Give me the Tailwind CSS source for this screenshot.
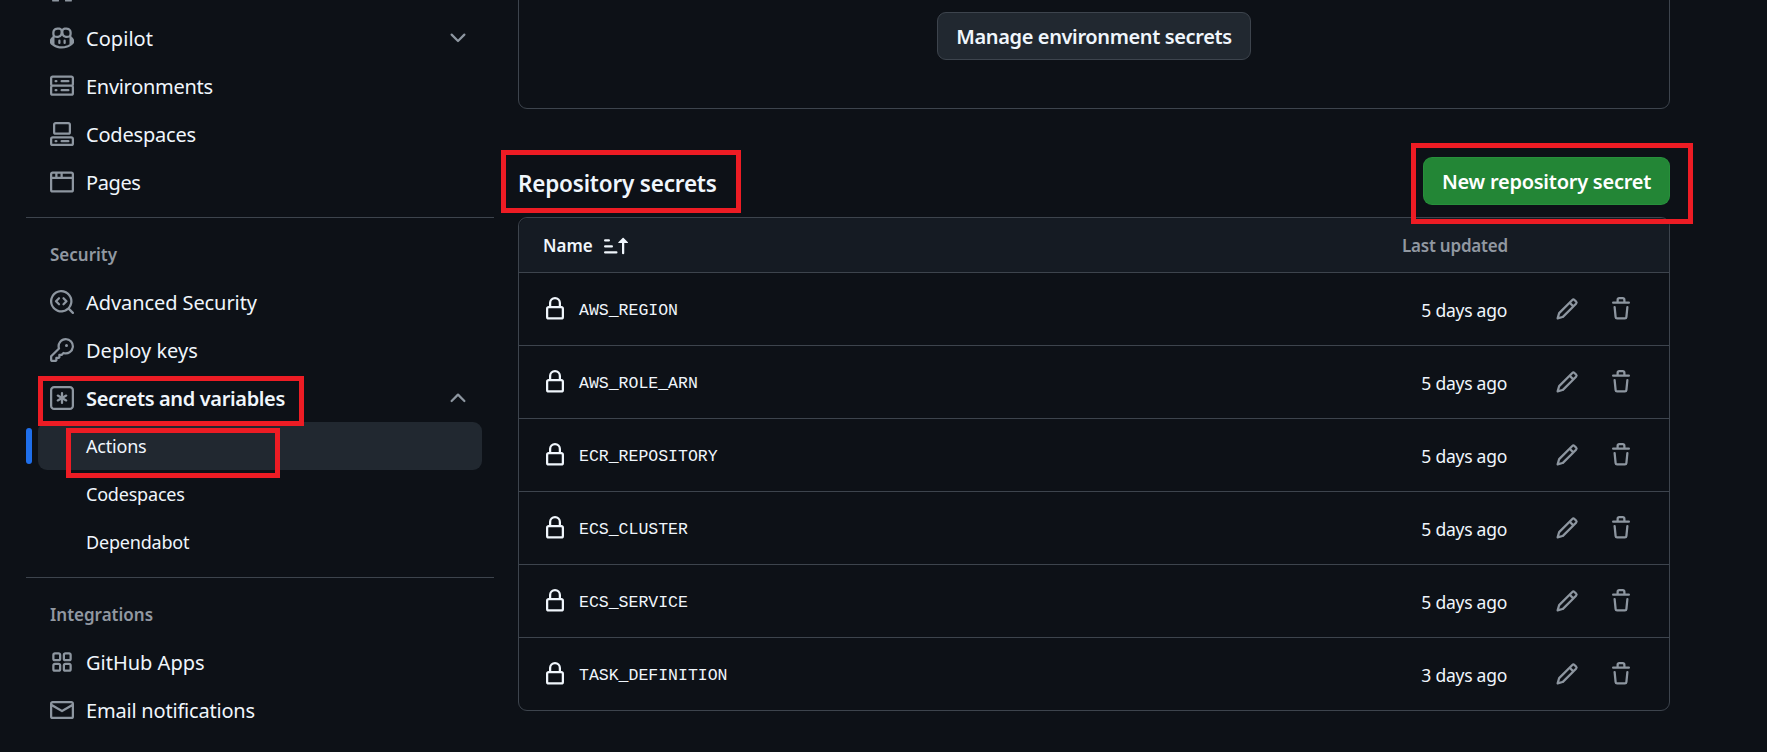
<!DOCTYPE html>
<html>
<head>
<meta charset="utf-8">
<script src="https://cdn.jsdelivr.net/npm/@tailwindcss/browser@4"></script>
</head>
<body class="bg-[#0d1117]">
<div class="relative flex h-[752px] w-[1767px] overflow-hidden bg-[#0d1117] font-['Noto_Sans',sans-serif] text-[#f0f6fc]">
  <aside class="ml-[26px] w-[468px] shrink-0 -mt-[34px] text-[20px] tracking-[-0.2px]">
    <div class="flex h-[48px] items-center gap-[12px] mx-[12px] px-[12px]">
      <svg class="h-[24px] w-[24px] shrink-0" viewBox="0 0 16 16" fill="#8d96a0"><rect x="1.4" y="14.4" width="4.600" height="1.300" rx=".6"/><rect x="10" y="14.400" width="4.600" height="1.300" rx=".6"/></svg>
    </div>
    <div class="flex h-[48px] items-center gap-[12px] mx-[12px] px-[12px]">
      <svg class="h-[24px] w-[24px] shrink-0" viewBox="0 0 16 16" fill="#8d96a0"><path d="M7.998 15.035c-4.562 0-7.873-2.914-7.998-3.749V9.338c.085-.628.677-1.686 1.588-2.065.013-.07.024-.143.036-.218.029-.183.06-.384.126-.612-.201-.508-.254-1.084-.254-1.656 0-.87.128-1.769.693-2.484.579-.733 1.494-1.124 2.724-1.261 1.206-.134 2.262.034 2.944.765.05.053.096.108.139.165.044-.057.094-.112.143-.165.682-.731 1.738-.899 2.944-.765 1.23.137 2.145.528 2.724 1.261.566.715.693 1.614.693 2.484 0 .572-.053 1.148-.254 1.656.066.228.098.429.126.612.012.076.024.148.037.218.924.385 1.522 1.471 1.591 2.095v1.872c0 .766-3.351 3.795-8.002 3.795Zm0-1.485c2.28 0 4.584-1.11 5.002-1.433V7.862l-.023-.116c-.49.21-1.075.291-1.727.291-1.146 0-2.059-.327-2.71-.991A3.222 3.222 0 0 1 8 6.303a3.24 3.24 0 0 1-.544.743c-.65.664-1.563.991-2.71.991-.652 0-1.236-.081-1.727-.291l-.023.116v4.255c.419.323 2.722 1.433 5.002 1.433ZM6.762 2.83c-.193-.206-.637-.413-1.682-.297-1.019.113-1.479.404-1.713.7-.247.312-.369.789-.369 1.554 0 .793.129 1.171.308 1.371.162.181.519.379 1.442.379.853 0 1.339-.235 1.638-.54.315-.322.527-.827.617-1.553.117-.935-.037-1.395-.241-1.614Zm4.155-.297c-1.044-.116-1.488.091-1.681.297-.204.219-.359.679-.242 1.614.091.726.303 1.231.618 1.553.299.305.784.54 1.638.54.922 0 1.28-.198 1.442-.379.179-.2.308-.578.308-1.371 0-.765-.123-1.242-.37-1.554-.233-.296-.693-.587-1.713-.7Z"/><path d="M6.25 9.037a.75.75 0 0 1 .75.75v1.501a.75.75 0 0 1-1.5 0V9.787a.75.75 0 0 1 .75-.75Zm4.25.75v1.501a.75.75 0 0 1-1.5 0V9.787a.75.75 0 0 1 1.5 0Z"/></svg>
      <span class="flex-1 pt-[2px] tracking-[0.05px]">Copilot</span>
      <svg class="h-[24px] w-[24px] shrink-0" viewBox="0 0 16 16" fill="#8d96a0"><path d="M12.78 5.22a.749.749 0 0 1 0 1.06l-4.25 4.25a.749.749 0 0 1-1.06 0L3.22 6.28a.749.749 0 1 1 1.06-1.06L8 8.939l3.72-3.719a.749.749 0 0 1 1.06 0Z"/></svg>
    </div>
    <div class="flex h-[48px] items-center gap-[12px] mx-[12px] px-[12px]">
      <svg class="h-[24px] w-[24px] shrink-0" viewBox="0 0 16 16" fill="#8d96a0"><path d="M1.75 1h12.5c.966 0 1.75.784 1.75 1.75v4c0 .372-.116.717-.314 1 .198.283.314.628.314 1v4a1.75 1.75 0 0 1-1.75 1.75H1.75A1.75 1.75 0 0 1 0 12.75v-4c0-.358.109-.707.314-1a1.739 1.739 0 0 1-.314-1v-4C0 1.784.784 1 1.75 1ZM1.5 2.75v4c0 .138.112.25.25.25h12.5a.25.25 0 0 0 .25-.25v-4a.25.25 0 0 0-.25-.25H1.75a.25.25 0 0 0-.25.25Zm.25 5.750a.25.25 0 0 0-.25.25v4c0 .138.112.25.25.25h12.5a.25.25 0 0 0 .25-.25v-4a.25.25 0 0 0-.25-.25ZM7 4.75A.75.75 0 0 1 7.75 4h4.5a.75.75 0 0 1 0 1.5h-4.5A.75.75 0 0 1 7 4.75ZM7.75 10h4.5a.75.75 0 0 1 0 1.5h-4.5a.75.75 0 0 1 0-1.500ZM3 4.75A.75.75 0 0 1 3.75 4h.5a.75.75 0 0 1 0 1.5h-.5A.75.75 0 0 1 3 4.75ZM3.75 10h.5a.75.75 0 0 1 0 1.5h-.5a.75.75 0 0 1 0-1.500Z"/></svg>
      <span class="pt-[2px] tracking-[-0.3px]">Environments</span>
    </div>
    <div class="flex h-[48px] items-center gap-[12px] mx-[12px] px-[12px]">
      <svg class="h-[24px] w-[24px] shrink-0" viewBox="0 0 16 16" fill="#8d96a0"><path d="M0 11.25c0-.966.784-1.75 1.75-1.75h12.5c.966 0 1.75.784 1.75 1.75v3A1.75 1.75 0 0 1 14.25 16H1.75A1.75 1.75 0 0 1 0 14.25Zm2-9.5C2 .784 2.784 0 3.75 0h8.5C13.216 0 14 .784 14 1.75v5a1.75 1.75 0 0 1-1.75 1.75h-8.5A1.75 1.75 0 0 1 2 6.75Zm1.75-.25a.25.25 0 0 0-.25.25v5c0 .138.112.25.25.25h8.5a.25.25 0 0 0 .25-.25v-5a.25.25 0 0 0-.25-.25Zm-2 9.500a.25.25 0 0 0-.25.25v3c0 .138.112.25.25.25h12.5a.25.25 0 0 0 .25-.25v-3a.25.25 0 0 0-.25-.25Z"/><path d="M7 12.75a.75.75 0 0 1 .75-.75h4.5a.75.75 0 0 1 0 1.5h-4.5a.75.75 0 0 1-.75-.75Zm-4 0a.75.75 0 0 1 .75-.75h.5a.75.75 0 0 1 0 1.5h-.5a.75.75 0 0 1-.75-.75Z"/></svg>
      <span class="pt-[2px]">Codespaces</span>
    </div>
    <div class="flex h-[48px] items-center gap-[12px] mx-[12px] px-[12px]">
      <svg class="h-[24px] w-[24px] shrink-0" viewBox="0 0 16 16" fill="#8d96a0"><path d="M0 2.75C0 1.784.784 1 1.75 1h12.5c.966 0 1.75.784 1.75 1.75v10.5A1.75 1.75 0 0 1 14.25 15H1.75A1.75 1.75 0 0 1 0 13.25ZM14.5 6h-13v7.25c0 .138.112.25.25.25h12.5a.25.25 0 0 0 .25-.25Zm-6-3.500v2h6v-1.750a.25.25 0 0 0-.25-.25ZM5 2.5v2h2v-2Zm-3.250 0a.25.25 0 0 0-.25.25V4.500h2v-2Z"/></svg>
      <span class="pt-[2px] tracking-[-0.4px]">Pages</span>
    </div>
    <div class="mt-[11px] h-px bg-[#3d444d]"></div>
    <div class="flex h-[60px] items-center pt-[14px] pl-[24px] text-[17px] font-semibold text-[#9198a1] tracking-normal">Security</div>
    <div class="flex h-[48px] items-center gap-[12px] mx-[12px] px-[12px]">
      <svg class="h-[24px] w-[24px] shrink-0" viewBox="0 0 16 16" fill="#8d96a0"><path d="M8.47 4.97a.75.75 0 0 0 0 1.06L9.94 7.5 8.47 8.97a.75.75 0 1 0 1.06 1.06l2-2a.75.75 0 0 0 0-1.06l-2-2a.75.75 0 0 0-1.06 0ZM6.53 6.03a.75.75 0 0 0-1.06-1.06l-2 2a.75.75 0 0 0 0 1.06l2 2a.75.75 0 1 0 1.06-1.06L5.06 7.5l1.47-1.47Z"/><path d="M12.246 13.307a7.501 7.501 0 1 1 1.06-1.06l2.474 2.473a.749.749 0 0 1-.326 1.275.749.749 0 0 1-.734-.215ZM1.5 7.5a6.002 6.002 0 0 0 3.608 5.504 6.002 6.002 0 0 0 6.486-1.117.748.748 0 0 1 .292-.293A6 6 0 1 0 1.5 7.5Z"/></svg>
      <span class="pt-[2px] tracking-[-0.08px]">Advanced Security</span>
    </div>
    <div class="flex h-[48px] items-center gap-[12px] mx-[12px] px-[12px]">
      <svg class="h-[24px] w-[24px] shrink-0" viewBox="0 0 16 16" fill="#8d96a0"><path d="M10.5 0a5.499 5.499 0 1 1-1.288 10.848l-.932.932a.749.749 0 0 1-.53.22H7v.75a.749.749 0 0 1-.22.53l-.5.5a.749.749 0 0 1-.53.22H5v.75a.749.749 0 0 1-.22.53l-.5.5a.749.749 0 0 1-.53.22h-2A1.75 1.75 0 0 1 0 14.25v-2c0-.199.079-.389.22-.53l4.932-4.932A5.5 5.5 0 0 1 10.5 0Zm-4 5.5c-.001.431.069.86.205 1.269a.75.75 0 0 1-.181.768L1.5 12.56v1.69c0 .138.112.25.25.25h1.69l.06-.06v-1.19a.75.75 0 0 1 .75-.75h1.19l.06-.06v-1.19a.75.75 0 0 1 .75-.75h1.19l1.023-1.025a.75.75 0 0 1 .768-.18A4 4 0 1 0 6.5 5.5ZM11 6a1 1 0 1 1 0-2 1 1 0 0 1 0 2Z"/></svg>
      <span class="pt-[2px] tracking-[0px]">Deploy keys</span>
    </div>
    <div class="flex h-[48px] items-center gap-[12px] mx-[12px] px-[12px]">
      <svg class="h-[24px] w-[24px] shrink-0" viewBox="0 0 16 16" fill="#8d96a0"><path d="M0 2.75A2.75 2.75 0 0 1 2.75 0h10.5A2.75 2.75 0 0 1 16 2.75v10.5A2.75 2.75 0 0 1 13.25 16H2.75A2.75 2.75 0 0 1 0 13.25ZM2.75 1.5c-.69 0-1.25.56-1.25 1.25v10.5c0 .69.56 1.25 1.25 1.25h10.5c.69 0 1.25-.56 1.25-1.25V2.75c0-.69-.56-1.25-1.25-1.25Z"/><path d="M8 4a.75.75 0 0 1 .75.75V6.7l1.69-.975a.75.75 0 0 1 .75 1.3L9.5 8l1.69.976a.75.75 0 0 1-.75 1.298L8.75 9.3v1.951a.75.75 0 0 1-1.5 0V9.299l-1.69.976a.75.75 0 0 1-.75-1.3L6.5 8l-1.69-.975a.75.75 0 0 1 .75-1.3l1.69.976V4.75A.75.75 0 0 1 8 4Z"/></svg>
      <span class="flex-1 pt-[2px] font-semibold tracking-[-0.36px]">Secrets and variables</span>
      <svg class="h-[24px] w-[24px] shrink-0" viewBox="0 0 16 16" fill="#8d96a0"><path d="M3.22 10.53a.749.749 0 0 1 0-1.06l4.25-4.25a.749.749 0 0 1 1.06 0l4.25 4.25a.749.749 0 1 1-1.06 1.06L8 6.811 4.28 10.53a.749.749 0 0 1-1.06 0Z"/></svg>
    </div>
    <div class="relative flex h-[48px] items-center mx-[12px] pl-[48px] rounded-[9px] bg-[#212830] text-[18px]">
      <span class="absolute -left-[12px] top-[6px] h-[36px] w-[6px] rounded-full bg-[#1f6feb]"></span>
      <span>Actions</span>
    </div>
    <div class="flex h-[48px] items-center mx-[12px] pl-[48px] text-[18px]">Codespaces</div>
    <div class="flex h-[48px] items-center mx-[12px] pl-[48px] text-[18px]">Dependabot</div>
    <div class="mt-[11px] h-px bg-[#3d444d]"></div>
    <div class="flex h-[60px] items-center pt-[14px] pl-[24px] text-[17px] font-semibold text-[#9198a1] tracking-normal">Integrations</div>
    <div class="flex h-[48px] items-center gap-[12px] mx-[12px] px-[12px]">
      <svg class="h-[24px] w-[24px] shrink-0" viewBox="0 0 16 16" fill="#8d96a0"><path d="M1.5 3.25c0-.966.784-1.75 1.75-1.75h2.5c.966 0 1.75.784 1.75 1.75v2.5A1.75 1.75 0 0 1 5.75 7.5h-2.5A1.75 1.75 0 0 1 1.5 5.75Zm7 0c0-.966.784-1.75 1.75-1.75h2.5c.966 0 1.75.784 1.75 1.75v2.5a1.75 1.75 0 0 1-1.75 1.75h-2.5A1.75 1.75 0 0 1 8.5 5.75Zm-7 7c0-.966.784-1.75 1.75-1.75h2.5c.966 0 1.75.784 1.75 1.75v2.5a1.75 1.75 0 0 1-1.75 1.75h-2.5a1.75 1.75 0 0 1-1.75-1.75Zm7 0c0-.966.784-1.75 1.75-1.75h2.5c.966 0 1.75.784 1.75 1.75v2.5a1.75 1.75 0 0 1-1.75 1.75h-2.5a1.75 1.75 0 0 1-1.75-1.75ZM3.25 3a.25.25 0 0 0-.25.25v2.5c0 .138.112.25.25.25h2.5A.25.25 0 0 0 6 5.75v-2.5A.25.25 0 0 0 5.75 3Zm7 0a.25.25 0 0 0-.25.25v2.5c0 .138.112.25.25.25h2.5a.25.25 0 0 0 .25-.25v-2.5a.25.25 0 0 0-.25-.25Zm-7 7a.25.25 0 0 0-.25.25v2.5c0 .138.112.25.25.25h2.5a.25.25 0 0 0 .25-.25v-2.5a.25.25 0 0 0-.25-.25Zm7 0a.25.25 0 0 0-.25.25v2.5c0 .138.112.25.25.25h2.5a.25.25 0 0 0 .25-.25v-2.5a.25.25 0 0 0-.25-.25Z"/></svg>
      <span class="pt-[2px] tracking-[0px]">GitHub Apps</span>
    </div>
    <div class="flex h-[48px] items-center gap-[12px] mx-[12px] px-[12px]">
      <svg class="h-[24px] w-[24px] shrink-0" viewBox="0 0 16 16" fill="#8d96a0"><path d="M1.75 2h12.5c.966 0 1.75.784 1.75 1.75v8.5A1.75 1.75 0 0 1 14.25 14H1.75A1.75 1.75 0 0 1 0 12.25v-8.5C0 2.784.784 2 1.75 2ZM1.5 12.251c0 .138.112.25.25.25h12.5a.25.25 0 0 0 .25-.25V5.809L8.38 9.397a.75.75 0 0 1-.76 0L1.5 5.809v6.442Zm13-8.181v-.32a.25.25 0 0 0-.25-.25H1.75a.25.25 0 0 0-.25.25v.32L8 7.88Z"/></svg>
      <span class="pt-[2px]">Email notifications</span>
    </div>
  </aside>

  <main class="ml-[24px] w-[1152px] shrink-0">
    <div class="-mt-[40px] flex h-[149px] justify-center rounded-b-[9px] border border-[#3d444d] pt-[51px]">
      <div class="flex h-[48px] w-[314px] items-center justify-center rounded-[9px] border border-[#3d444d] bg-[#212830] pt-[2px] text-[20px] font-semibold tracking-[-0.37px]">Manage environment secrets</div>
    </div>
    <div class="mt-[48px] mb-[12px] flex h-[48px] items-center justify-between">
      <h2 class="pt-[5px] text-[22.5px] font-semibold tracking-[-0.2px]">Repository secrets</h2>
      <div class="flex h-[48px] w-[247px] items-center justify-center rounded-[9px] border border-[#2ea043]/40 bg-[#238636] pt-[2px] text-[20px] font-semibold tracking-[-0.25px] text-white">New repository secret</div>
    </div>
    <div class="h-[494px] rounded-[9px] border border-[#3d444d] bg-[#0d1117]">
      <div class="flex h-[55px] items-center rounded-t-[9px] border-b border-[#3d444d] bg-[#151b23] pl-[24px] pt-px text-[17px] font-semibold">
        <span>Name</span>
        <svg class="ml-[11px] h-[24px] w-[24px]" viewBox="0 0 16 16" fill="#f0f6fc"><path d="m12.927 2.573 3 3A.25.25 0 0 1 15.75 6H13.5v6.75a.75.75 0 0 1-1.5 0V6H9.75a.25.25 0 0 1-.177-.427l3-3a.25.25 0 0 1 .354 0ZM0 12.25a.75.75 0 0 1 .75-.75h7.5a.75.75 0 0 1 0 1.5H.75a.75.75 0 0 1-.75-.75Zm0-4a.75.75 0 0 1 .75-.75h4.5a.75.75 0 0 1 0 1.5H.75A.75.75 0 0 1 0 8.25Zm0-4a.75.75 0 0 1 .75-.75h2.5a.75.75 0 0 1 0 1.5H.75A.75.75 0 0 1 0 4.25Z"/></svg>
        <span class="ml-auto mr-[161px] tracking-[-0.2px] text-[#9198a1]">Last updated</span>
      </div>
      <div class="flex h-[73px] items-center border-b border-[#3d444d] pl-[24px]">
        <svg class="h-[24px] w-[24px]" viewBox="0 0 16 16" fill="#f0f6fc"><path d="M4 4a4 4 0 0 1 8 0v2h.25c.966 0 1.75.784 1.75 1.75v5.5A1.75 1.75 0 0 1 12.25 15h-8.500A1.75 1.75 0 0 1 2 13.25v-5.500C2 6.784 2.784 6 3.750 6H4Zm8.250 3.500h-8.500a.25.25 0 0 0-.25.25v5.500c0 .138.112.25.25.25h8.500a.25.25 0 0 0 .25-.25v-5.500a.25.25 0 0 0-.25-.25ZM10.500 6V4a2.500 2.500 0 1 0-5 0v2Z"/></svg>
        <span class="ml-[12px] flex-1 pt-[4px] font-['Liberation_Mono',monospace] text-[16.5px]">AWS_REGION</span>
        <span class="pt-[2px] text-[17.5px] tracking-[-0.25px]">5 days ago</span>
        <svg class="ml-[48px] h-[24px] w-[24px]" viewBox="0 0 16 16" fill="#8d96a0"><path d="M11.013 1.427a1.75 1.75 0 0 1 2.474 0l1.086 1.086a1.75 1.75 0 0 1 0 2.474l-8.610 8.610c-.21.21-.47.364-.756.445l-3.251.93a.75.75 0 0 1-.927-.928l.929-3.250c.081-.286.235-.547.445-.758l8.610-8.610Zm.176 4.823L9.750 4.810l-6.286 6.287a.253.253 0 0 0-.064.108l-.558 1.953 1.953-.558a.253.253 0 0 0 .108-.064Zm1.238-3.763a.25.25 0 0 0-.354 0L10.811 3.750l1.439 1.440 1.263-1.263a.25.25 0 0 0 0-.354Z"/></svg>
        <svg class="ml-[30px] mr-[36px] h-[24px] w-[24px]" viewBox="0 0 16 16" fill="#8d96a0"><path d="M11 1.750V3h2.250a.75.75 0 0 1 0 1.500H2.750a.75.75 0 0 1 0-1.500H5V1.750C5 .784 5.784 0 6.750 0h2.500C10.216 0 11 .784 11 1.750ZM4.496 6.675l.66 6.600a.25.25 0 0 0 .249.225h5.190a.25.25 0 0 0 .249-.225l.66-6.600a.75.75 0 0 1 1.492.149l-.66 6.600A1.748 1.748 0 0 1 10.595 15h-5.190a1.750 1.750 0 0 1-1.741-1.575l-.66-6.600a.75.75 0 1 1 1.492-.150ZM6.500 1.750V3h3V1.750a.25.25 0 0 0-.25-.25h-2.500a.25.25 0 0 0-.25.25Z"/></svg>
      </div>
      <div class="flex h-[73px] items-center border-b border-[#3d444d] pl-[24px]">
        <svg class="h-[24px] w-[24px]" viewBox="0 0 16 16" fill="#f0f6fc"><path d="M4 4a4 4 0 0 1 8 0v2h.25c.966 0 1.75.784 1.75 1.75v5.5A1.75 1.75 0 0 1 12.25 15h-8.500A1.75 1.75 0 0 1 2 13.25v-5.500C2 6.784 2.784 6 3.750 6H4Zm8.250 3.500h-8.500a.25.25 0 0 0-.25.25v5.500c0 .138.112.25.25.25h8.500a.25.25 0 0 0 .25-.25v-5.500a.25.25 0 0 0-.25-.25ZM10.500 6V4a2.500 2.500 0 1 0-5 0v2Z"/></svg>
        <span class="ml-[12px] flex-1 pt-[4px] font-['Liberation_Mono',monospace] text-[16.5px]">AWS_ROLE_ARN</span>
        <span class="pt-[2px] text-[17.5px] tracking-[-0.25px]">5 days ago</span>
        <svg class="ml-[48px] h-[24px] w-[24px]" viewBox="0 0 16 16" fill="#8d96a0"><path d="M11.013 1.427a1.75 1.75 0 0 1 2.474 0l1.086 1.086a1.75 1.75 0 0 1 0 2.474l-8.610 8.610c-.21.21-.47.364-.756.445l-3.251.93a.75.75 0 0 1-.927-.928l.929-3.250c.081-.286.235-.547.445-.758l8.610-8.610Zm.176 4.823L9.750 4.810l-6.286 6.287a.253.253 0 0 0-.064.108l-.558 1.953 1.953-.558a.253.253 0 0 0 .108-.064Zm1.238-3.763a.25.25 0 0 0-.354 0L10.811 3.750l1.439 1.440 1.263-1.263a.25.25 0 0 0 0-.354Z"/></svg>
        <svg class="ml-[30px] mr-[36px] h-[24px] w-[24px]" viewBox="0 0 16 16" fill="#8d96a0"><path d="M11 1.750V3h2.250a.75.75 0 0 1 0 1.500H2.750a.75.75 0 0 1 0-1.500H5V1.750C5 .784 5.784 0 6.750 0h2.500C10.216 0 11 .784 11 1.750ZM4.496 6.675l.66 6.600a.25.25 0 0 0 .249.225h5.190a.25.25 0 0 0 .249-.225l.66-6.600a.75.75 0 0 1 1.492.149l-.66 6.600A1.748 1.748 0 0 1 10.595 15h-5.190a1.750 1.750 0 0 1-1.741-1.575l-.66-6.600a.75.75 0 1 1 1.492-.150ZM6.500 1.750V3h3V1.750a.25.25 0 0 0-.25-.25h-2.500a.25.25 0 0 0-.25.25Z"/></svg>
      </div>
      <div class="flex h-[73px] items-center border-b border-[#3d444d] pl-[24px]">
        <svg class="h-[24px] w-[24px]" viewBox="0 0 16 16" fill="#f0f6fc"><path d="M4 4a4 4 0 0 1 8 0v2h.25c.966 0 1.75.784 1.75 1.75v5.5A1.75 1.75 0 0 1 12.25 15h-8.500A1.75 1.75 0 0 1 2 13.25v-5.500C2 6.784 2.784 6 3.750 6H4Zm8.250 3.500h-8.500a.25.25 0 0 0-.25.25v5.500c0 .138.112.25.25.25h8.500a.25.25 0 0 0 .25-.25v-5.500a.25.25 0 0 0-.25-.25ZM10.500 6V4a2.500 2.500 0 1 0-5 0v2Z"/></svg>
        <span class="ml-[12px] flex-1 pt-[4px] font-['Liberation_Mono',monospace] text-[16.5px]">ECR_REPOSITORY</span>
        <span class="pt-[2px] text-[17.5px] tracking-[-0.25px]">5 days ago</span>
        <svg class="ml-[48px] h-[24px] w-[24px]" viewBox="0 0 16 16" fill="#8d96a0"><path d="M11.013 1.427a1.75 1.75 0 0 1 2.474 0l1.086 1.086a1.75 1.75 0 0 1 0 2.474l-8.610 8.610c-.21.21-.47.364-.756.445l-3.251.93a.75.75 0 0 1-.927-.928l.929-3.250c.081-.286.235-.547.445-.758l8.610-8.610Zm.176 4.823L9.750 4.810l-6.286 6.287a.253.253 0 0 0-.064.108l-.558 1.953 1.953-.558a.253.253 0 0 0 .108-.064Zm1.238-3.763a.25.25 0 0 0-.354 0L10.811 3.750l1.439 1.440 1.263-1.263a.25.25 0 0 0 0-.354Z"/></svg>
        <svg class="ml-[30px] mr-[36px] h-[24px] w-[24px]" viewBox="0 0 16 16" fill="#8d96a0"><path d="M11 1.750V3h2.250a.75.75 0 0 1 0 1.500H2.750a.75.75 0 0 1 0-1.500H5V1.750C5 .784 5.784 0 6.750 0h2.500C10.216 0 11 .784 11 1.750ZM4.496 6.675l.66 6.600a.25.25 0 0 0 .249.225h5.190a.25.25 0 0 0 .249-.225l.66-6.600a.75.75 0 0 1 1.492.149l-.66 6.600A1.748 1.748 0 0 1 10.595 15h-5.190a1.750 1.750 0 0 1-1.741-1.575l-.66-6.600a.75.75 0 1 1 1.492-.150ZM6.500 1.750V3h3V1.750a.25.25 0 0 0-.25-.25h-2.500a.25.25 0 0 0-.25.25Z"/></svg>
      </div>
      <div class="flex h-[73px] items-center border-b border-[#3d444d] pl-[24px]">
        <svg class="h-[24px] w-[24px]" viewBox="0 0 16 16" fill="#f0f6fc"><path d="M4 4a4 4 0 0 1 8 0v2h.25c.966 0 1.75.784 1.75 1.75v5.5A1.75 1.75 0 0 1 12.25 15h-8.500A1.75 1.75 0 0 1 2 13.25v-5.500C2 6.784 2.784 6 3.750 6H4Zm8.250 3.500h-8.500a.25.25 0 0 0-.25.25v5.500c0 .138.112.25.25.25h8.500a.25.25 0 0 0 .25-.25v-5.500a.25.25 0 0 0-.25-.25ZM10.500 6V4a2.500 2.500 0 1 0-5 0v2Z"/></svg>
        <span class="ml-[12px] flex-1 pt-[4px] font-['Liberation_Mono',monospace] text-[16.5px]">ECS_CLUSTER</span>
        <span class="pt-[2px] text-[17.5px] tracking-[-0.25px]">5 days ago</span>
        <svg class="ml-[48px] h-[24px] w-[24px]" viewBox="0 0 16 16" fill="#8d96a0"><path d="M11.013 1.427a1.75 1.75 0 0 1 2.474 0l1.086 1.086a1.75 1.75 0 0 1 0 2.474l-8.610 8.610c-.21.21-.47.364-.756.445l-3.251.93a.75.75 0 0 1-.927-.928l.929-3.250c.081-.286.235-.547.445-.758l8.610-8.610Zm.176 4.823L9.750 4.810l-6.286 6.287a.253.253 0 0 0-.064.108l-.558 1.953 1.953-.558a.253.253 0 0 0 .108-.064Zm1.238-3.763a.25.25 0 0 0-.354 0L10.811 3.750l1.439 1.440 1.263-1.263a.25.25 0 0 0 0-.354Z"/></svg>
        <svg class="ml-[30px] mr-[36px] h-[24px] w-[24px]" viewBox="0 0 16 16" fill="#8d96a0"><path d="M11 1.750V3h2.250a.75.75 0 0 1 0 1.500H2.750a.75.75 0 0 1 0-1.500H5V1.750C5 .784 5.784 0 6.750 0h2.500C10.216 0 11 .784 11 1.750ZM4.496 6.675l.66 6.600a.25.25 0 0 0 .249.225h5.190a.25.25 0 0 0 .249-.225l.66-6.600a.75.75 0 0 1 1.492.149l-.66 6.600A1.748 1.748 0 0 1 10.595 15h-5.190a1.750 1.750 0 0 1-1.741-1.575l-.66-6.600a.75.75 0 1 1 1.492-.150ZM6.500 1.750V3h3V1.750a.25.25 0 0 0-.25-.25h-2.500a.25.25 0 0 0-.25.25Z"/></svg>
      </div>
      <div class="flex h-[73px] items-center border-b border-[#3d444d] pl-[24px]">
        <svg class="h-[24px] w-[24px]" viewBox="0 0 16 16" fill="#f0f6fc"><path d="M4 4a4 4 0 0 1 8 0v2h.25c.966 0 1.75.784 1.75 1.75v5.5A1.75 1.75 0 0 1 12.25 15h-8.500A1.75 1.75 0 0 1 2 13.25v-5.500C2 6.784 2.784 6 3.750 6H4Zm8.250 3.500h-8.500a.25.25 0 0 0-.25.25v5.500c0 .138.112.25.25.25h8.500a.25.25 0 0 0 .25-.25v-5.500a.25.25 0 0 0-.25-.25ZM10.500 6V4a2.500 2.500 0 1 0-5 0v2Z"/></svg>
        <span class="ml-[12px] flex-1 pt-[4px] font-['Liberation_Mono',monospace] text-[16.5px]">ECS_SERVICE</span>
        <span class="pt-[2px] text-[17.5px] tracking-[-0.25px]">5 days ago</span>
        <svg class="ml-[48px] h-[24px] w-[24px]" viewBox="0 0 16 16" fill="#8d96a0"><path d="M11.013 1.427a1.75 1.75 0 0 1 2.474 0l1.086 1.086a1.75 1.75 0 0 1 0 2.474l-8.610 8.610c-.21.21-.47.364-.756.445l-3.251.93a.75.75 0 0 1-.927-.928l.929-3.250c.081-.286.235-.547.445-.758l8.610-8.610Zm.176 4.823L9.750 4.810l-6.286 6.287a.253.253 0 0 0-.064.108l-.558 1.953 1.953-.558a.253.253 0 0 0 .108-.064Zm1.238-3.763a.25.25 0 0 0-.354 0L10.811 3.750l1.439 1.440 1.263-1.263a.25.25 0 0 0 0-.354Z"/></svg>
        <svg class="ml-[30px] mr-[36px] h-[24px] w-[24px]" viewBox="0 0 16 16" fill="#8d96a0"><path d="M11 1.750V3h2.250a.75.75 0 0 1 0 1.500H2.750a.75.75 0 0 1 0-1.500H5V1.750C5 .784 5.784 0 6.750 0h2.500C10.216 0 11 .784 11 1.750ZM4.496 6.675l.66 6.600a.25.25 0 0 0 .249.225h5.190a.25.25 0 0 0 .249-.225l.66-6.600a.75.75 0 0 1 1.492.149l-.66 6.600A1.748 1.748 0 0 1 10.595 15h-5.190a1.750 1.750 0 0 1-1.741-1.575l-.66-6.600a.75.75 0 1 1 1.492-.150ZM6.500 1.750V3h3V1.750a.25.25 0 0 0-.25-.25h-2.500a.25.25 0 0 0-.25.25Z"/></svg>
      </div>
      <div class="flex h-[72px] items-center pl-[24px]">
        <svg class="h-[24px] w-[24px]" viewBox="0 0 16 16" fill="#f0f6fc"><path d="M4 4a4 4 0 0 1 8 0v2h.25c.966 0 1.75.784 1.75 1.75v5.5A1.75 1.75 0 0 1 12.25 15h-8.500A1.75 1.75 0 0 1 2 13.25v-5.500C2 6.784 2.784 6 3.750 6H4Zm8.250 3.500h-8.500a.25.25 0 0 0-.25.25v5.500c0 .138.112.25.25.25h8.500a.25.25 0 0 0 .25-.25v-5.500a.25.25 0 0 0-.25-.25ZM10.500 6V4a2.500 2.500 0 1 0-5 0v2Z"/></svg>
        <span class="ml-[12px] flex-1 pt-[4px] font-['Liberation_Mono',monospace] text-[16.5px]">TASK_DEFINITION</span>
        <span class="pt-[2px] text-[17.5px] tracking-[-0.25px]">3 days ago</span>
        <svg class="ml-[48px] h-[24px] w-[24px]" viewBox="0 0 16 16" fill="#8d96a0"><path d="M11.013 1.427a1.75 1.75 0 0 1 2.474 0l1.086 1.086a1.75 1.75 0 0 1 0 2.474l-8.610 8.610c-.21.21-.47.364-.756.445l-3.251.93a.75.75 0 0 1-.927-.928l.929-3.250c.081-.286.235-.547.445-.758l8.610-8.610Zm.176 4.823L9.750 4.810l-6.286 6.287a.253.253 0 0 0-.064.108l-.558 1.953 1.953-.558a.253.253 0 0 0 .108-.064Zm1.238-3.763a.25.25 0 0 0-.354 0L10.811 3.750l1.439 1.440 1.263-1.263a.25.25 0 0 0 0-.354Z"/></svg>
        <svg class="ml-[30px] mr-[36px] h-[24px] w-[24px]" viewBox="0 0 16 16" fill="#8d96a0"><path d="M11 1.750V3h2.250a.75.75 0 0 1 0 1.500H2.750a.75.75 0 0 1 0-1.500H5V1.750C5 .784 5.784 0 6.750 0h2.500C10.216 0 11 .784 11 1.750ZM4.496 6.675l.66 6.600a.25.25 0 0 0 .249.225h5.190a.25.25 0 0 0 .249-.225l.66-6.600a.75.75 0 0 1 1.492.149l-.66 6.600A1.748 1.748 0 0 1 10.595 15h-5.190a1.750 1.750 0 0 1-1.741-1.575l-.66-6.600a.75.75 0 1 1 1.492-.150ZM6.500 1.750V3h3V1.750a.25.25 0 0 0-.25-.25h-2.500a.25.25 0 0 0-.25.25Z"/></svg>
      </div>
    </div>
  </main>

  <div class="absolute left-[38px] top-[376px] h-[50px] w-[266px] border-[5px] border-[#ed1c24]"></div>
  <div class="absolute left-[66px] top-[428px] h-[50px] w-[214px] border-[5px] border-[#ed1c24]"></div>
  <div class="absolute left-[501px] top-[150px] h-[63px] w-[240px] border-[5px] border-[#ed1c24]"></div>
  <div class="absolute left-[1411px] top-[143px] h-[81px] w-[282px] border-[5px] border-[#ed1c24]"></div>
</div>
</body>
</html>
